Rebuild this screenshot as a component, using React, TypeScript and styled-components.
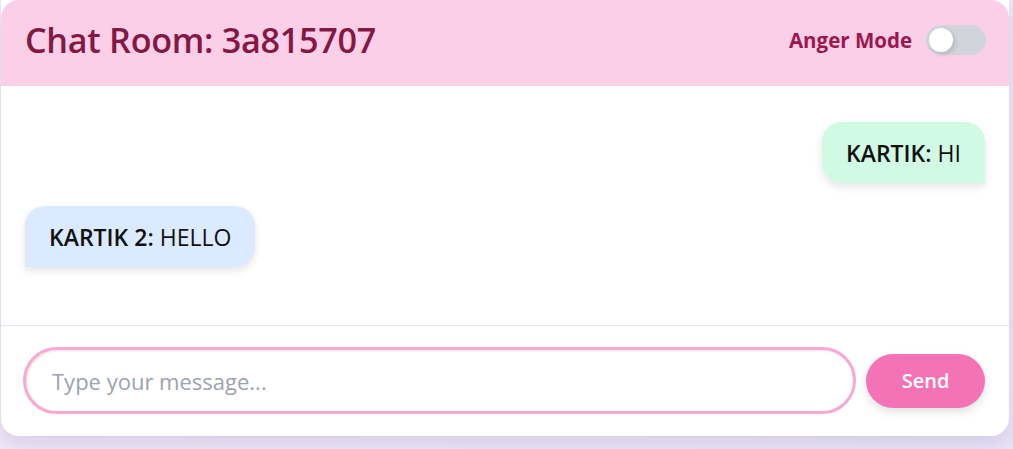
import React, { useState } from "react"
import styled, { createGlobalStyle } from "styled-components"

const GlobalStyle = createGlobalStyle`
  html, body {
    margin: 0;
    padding: 0;
    height: 100%;
  }
  body {
    background: linear-gradient(135deg, #f3e8f7 0%, #e8e4f6 100%);
    font-family: "Open Sans", "Noto Sans", sans-serif;
  }
`

const messages = [
  { id: 1, user: "KARTIK", text: "HI", mine: true },
  { id: 2, user: "KARTIK 2", text: "HELLO", mine: false },
]

const App = () => {
  const [anger, setAnger] = useState(false)
  const [draft, setDraft] = useState("")

  return (
    <>
      <GlobalStyle />
      <Page>
        <Card>
          <Header>
            <Title>Chat Room: 3a815707</Title>
            <ModeBox>
              <ModeLabel>Anger Mode</ModeLabel>
              <Toggle $on={anger} onClick={() => setAnger(!anger)}>
                <Knob $on={anger} />
              </Toggle>
            </ModeBox>
          </Header>
          <Messages>
            {messages.map(m => (
              <Row key={m.id} $mine={m.mine}>
                <Bubble $mine={m.mine}>
                  <Name>{m.user}:</Name> {m.text}
                </Bubble>
              </Row>
            ))}
          </Messages>
          <Footer>
            <Input
              autoFocus
              placeholder="Type your message..."
              value={draft}
              onChange={e => setDraft(e.target.value)}
            />
            <SendButton>Send</SendButton>
          </Footer>
        </Card>
      </Page>
    </>
  )
}

export default App

const Page = styled.div`
  padding: 0 4px 12px 1px;
`

const Card = styled.div`
  width: 1008px;
  background: #fff;
  border-radius: 0 0 18px 18px;
  overflow: hidden;
  box-shadow: 0 8px 18px rgba(120, 100, 170, 0.18);
  display: flex;
  flex-direction: column;
`

const Header = styled.div`
  height: 86px;
  box-sizing: border-box;
  background: #fbcfe8;
  border-radius: 18px 18px 0 0;
  display: flex;
  align-items: center;
  justify-content: space-between;
  padding: 0 23px 7px 24px;
`

const Title = styled.h1`
  margin: 0;
  font-size: 34.2px;
  font-weight: 600;
  color: #831843;
  letter-spacing: -0.3px;
`

const ModeBox = styled.div`
  display: flex;
  align-items: center;
  gap: 14px;
`

const ModeLabel = styled.span`
  font-size: 20.5px;
  font-weight: 700;
  color: #9d174d;
`

const Toggle = styled.div<{ $on: boolean }>`
  width: 60px;
  height: 30px;
  border-radius: 15px;
  background: ${p => (p.$on ? "#ef4444" : "#d1d5db")};
  display: flex;
  align-items: center;
  padding: 0 3px;
  box-sizing: border-box;
  justify-content: ${p => (p.$on ? "flex-end" : "flex-start")};
  cursor: pointer;
`

const Knob = styled.div<{ $on: boolean }>`
  width: 24px;
  height: 24px;
  border-radius: 50%;
  background: #fff;
  box-shadow: 2px 2px 5px rgba(0, 0, 0, 0.15);
`

const Messages = styled.div`
  height: 240px;
  box-sizing: border-box;
  padding: 36px 24px 24px;
  display: flex;
  flex-direction: column;
  gap: 23px;
  border-bottom: 1px solid #e8e4f0;
`

const Row = styled.div<{ $mine: boolean }>`
  display: flex;
  justify-content: ${p => (p.$mine ? "flex-end" : "flex-start")};
`

const Bubble = styled.div<{ $mine: boolean }>`
  height: 61px;
  box-sizing: border-box;
  display: flex;
  align-items: center;
  gap: 6px;
  padding: 0 24px;
  font-size: 23px;
  color: #111;
  background: ${p => (p.$mine ? "#d1fae5" : "#dbeafe")};
  border-radius: ${p => (p.$mine ? "20px 20px 0 20px" : "20px 20px 20px 0")};
  box-shadow: 0 4px 8px rgba(0, 0, 0, 0.1);
`

const Name = styled.span`
  font-weight: 600;
`

const Footer = styled.div`
  display: flex;
  align-items: center;
  gap: 10px;
  padding: 21px 24px 22px 22px;
`

const Input = styled.input`
  flex: 1;
  height: 67px;
  box-sizing: border-box;
  border: 3px solid #f9a8d4;
  border-radius: 34px;
  padding: 0 26px;
  font-family: "Open Sans", "Noto Sans", sans-serif;
  font-size: 22px;
  color: #111;
  outline: none;
  box-shadow: inset 1px 1px 2px rgba(0, 0, 0, 0.12);
  &::placeholder {
    color: #9ca3af;
  }
`

const SendButton = styled.button`
  width: 119px;
  height: 54px;
  border: none;
  border-radius: 27px;
  background: #f472b6;
  color: #fff;
  font-family: "Open Sans", "Noto Sans", sans-serif;
  font-size: 20px;
  font-weight: 600;
  box-shadow: 0 4px 10px rgba(0, 0, 0, 0.12);
  cursor: pointer;
`
